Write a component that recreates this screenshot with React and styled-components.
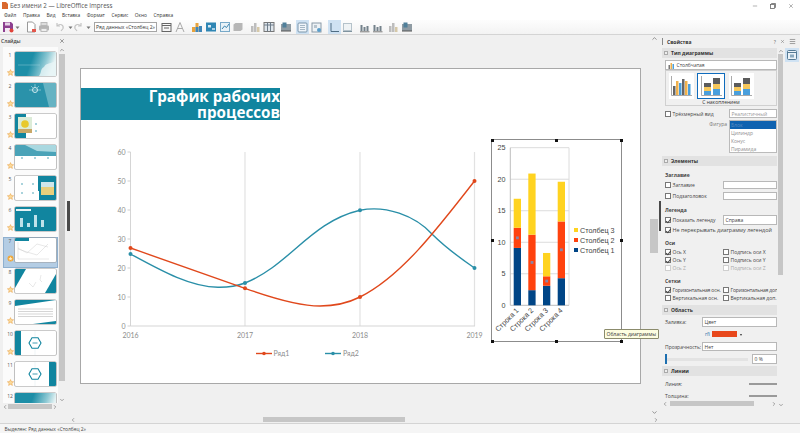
import React from "react";
import styled, { createGlobalStyle } from "styled-components";
import { ChevronUp, ChevronDown, ChevronLeft, ChevronRight, X, Minus, Menu } from "lucide-react";

const GlobalStyle = createGlobalStyle`
  html, body { margin: 0; padding: 0; background: #f0f0f0; }
  * { box-sizing: border-box; }
`;

const TEAL = "#11859f";

const Window = styled.div`
  width: 800px;
  height: 433px;
  overflow: hidden;
  display: flex;
  flex-direction: column;
  background: #f0f0f0;
  color: #333;
  font-family: "Open Sans", sans-serif;
  font-size: 5px;
`;
const TitleBar = styled.div`
  height: 10px;
  flex: none;
  display: flex;
  align-items: center;
  padding-left: 2px;
  gap: 2px;
  background: #fff;
  font-size: 6.2px;
`;
const TitleText = styled.span`
  color: #555;
`;
const WinButtons = styled.div`
  margin-left: auto;
  margin-top: 2px;
  display: flex;
  gap: 12px;
  padding-right: 6px;
  color: #666;
`;
const MenuBar = styled.div`
  height: 10px;
  flex: none;
  display: flex;
  align-items: center;
  gap: 6.6px;
  padding-left: 4px;
  background: #fff;
  font-size: 4.8px;
`;
const ToolBar = styled.div`
  height: 15px;
  flex: none;
  display: flex;
  align-items: center;
  padding-left: 1.5px;
  background: linear-gradient(#fdfdfd, #f3f3f3);
  border-bottom: 1px solid #d4d4d4;
`;
const ToolBtn = styled.div`
  width: ${(p) => p.$w || 13}px;
  height: 14px;
  flex: none;
  display: flex;
  align-items: center;
  justify-content: center;
  margin-left: ${(p) => p.$gap || 0}px;
  background: ${(p) => (p.$on ? "#cfe2f3" : "transparent")};
`;
const Combo = styled.div`
  width: 63px;
  height: 10px;
  flex: none;
  margin-left: 2.5px;
  display: flex;
  align-items: center;
  justify-content: space-between;
  padding-left: 1px;
  background: #fff;
  border: 1px solid #a5a5a5;
  white-space: nowrap;
  overflow: hidden;
`;
const Main = styled.div`
  flex: 1;
  min-height: 0;
  display: flex;
`;
const SlidesPanel = styled.div`
  width: 67px;
  flex: none;
  display: flex;
  flex-direction: column;
`;
const PanelHead = styled.div`
  height: 12px;
  flex: none;
  display: flex;
  align-items: center;
  justify-content: space-between;
  padding: 0 2px 0 1px;
  font-weight: 600;
  color: #444;
`;
const SlidesBody = styled.div`
  height: 356px;
  flex: none;
  display: flex;
  padding-left: 3px;
`;
const SlideList = styled.div`
  width: 55px;
  flex: none;
  overflow: hidden;
  padding-top: 3.7px;
  background: #fbfbfb;
`;
const SlideRow = styled.div`
  height: 31px;
  display: flex;
  padding: 1px 0 0 1px;
  background: ${(p) => (p.$on ? "#b4cde4" : "transparent")};
  box-shadow: ${(p) => (p.$on ? "inset 0 0 0 1px #8fb0cf" : "none")};
`;
const SlideNum = styled.div`
  width: 11px;
  height: 24px;
  flex: none;
  display: flex;
  flex-direction: column;
  justify-content: space-between;
  align-items: center;
  padding-left: 1px;
  color: #555;
  line-height: 6px;
  text-align: right;
`;
const ThumbFrame = styled.svg`
  width: 41px;
  height: 24px;
  flex: none;
  display: block;
  border-radius: 1px;
  box-shadow: 0 0 0 0.6px #9a9a9a;
  background: #fff;
`;
const VScroll = styled.div`
  width: ${(p) => p.$w || 8}px;
  flex: none;
  display: flex;
  flex-direction: column;
  align-items: center;
  color: #555;
`;
const VTrack = styled.div`
  flex: 1;
  width: 100%;
  padding: ${(p) => p.$top || 0}px 1px ${(p) => p.$bottom || 0}px;
`;
const VThumb = styled.div`
  width: 100%;
  height: 100%;
  background: #c6c6c6;
`;
const HScroll = styled.div`
  height: 7px;
  width: ${(p) => (p.$w ? `${p.$w}px` : "auto")};
  flex: none;
  display: flex;
  align-items: center;
  color: #555;
  padding-left: ${(p) => p.$pad || 0}px;
`;
const HTrack = styled.div`
  flex: 1;
  height: 100%;
  padding: 1px ${(p) => p.$right || 0}px 1px ${(p) => p.$left || 0}px;
`;
const HThumb = styled.div`
  width: 100%;
  height: 100%;
  background: #c6c6c6;
`;
const Splitter = styled.div`
  width: ${(p) => p.$w || 3}px;
  flex: none;
  display: flex;
  align-items: center;
  padding-bottom: 27px;
`;
const SplitGrip = styled.div`
  width: 100%;
  height: 30px;
  background: #4a4a4a;
`;
const CanvasArea = styled.div`
  flex: 1;
  min-width: 0;
  display: flex;
  flex-direction: column;
`;
const CanvasRow = styled.div`
  flex: 1;
  min-height: 0;
  display: flex;
`;
const Workspace = styled.div`
  flex: 1;
  min-width: 0;
  padding: 33px 0 0 10px;
`;
const Slide = styled.div`
  width: 561px;
  height: 316px;
  position: relative;
  background: #fff;
  border: 1px solid #a8a8a8;
`;
const SlideTitle = styled.div`
  position: absolute;
  left: 0;
  top: 18.5px;
  width: 199px;
  height: 32px;
  background: ${TEAL};
  color: #fff;
  font-weight: 700;
  font-size: 15.2px;
  line-height: 16px;
  text-align: right;
`;
const LineChart = styled.svg`
  position: absolute;
  left: 19px;
  top: 71px;
  width: 400px;
  height: 240px;
`;
const ChartFrame = styled.div`
  position: absolute;
  left: 410px;
  top: 70px;
  width: 131px;
  height: 203px;
  border: 1.2px solid #8c8c8c;
  background: #fff;
`;
const BarChart = styled.svg`
  display: block;
  width: 129px;
  height: 201px;
`;
const Handle = styled.span`
  position: absolute;
  left: ${(p) => p.$x}%;
  top: ${(p) => p.$y}%;
  width: 3px;
  height: 3px;
  margin: -1.5px 0 0 -1.5px;
  background: #111;
`;
const Tooltip = styled.div`
  position: absolute;
  left: 523px;
  top: 260px;
  padding: 0 1.5px;
  height: 10px;
  line-height: 9px;
  white-space: nowrap;
  color: #333;
  background: #fdfde0;
  border: 1px solid #8b8b6c;
  border-radius: 1px;
`;
const RightPanel = styled.div`
  width: 124px;
  flex: none;
  padding-left: 1px;
  display: flex;
  flex-direction: column;
  background: #f0f0f0;
`;
const PropsHead = styled.div`
  height: 13px;
  flex: none;
  display: flex;
  align-items: center;
  gap: 3px;
  font-weight: 700;
  color: #333;
`;
const Grip = styled.span`
  width: 1px;
  height: 7px;
  background: #888;
  margin-right: 1px;
`;
const PropsBody = styled.div`
  display: flex;
  height: 360px;
`;
const PropsContent = styled.div`
  width: 115px;
  flex: none;
  overflow: hidden;
`;
const Band = styled.div`
  height: 10px;
  margin-top: ${(p) => p.$mt || 0}px;
  display: flex;
  align-items: center;
  gap: 3px;
  padding-left: 2px;
  background: #e2e2e2;
  font-weight: 700;
  color: #333;
`;
const BandMark = styled.span`
  width: 4px;
  height: 4px;
  border: 0.6px solid #aaa;
  background: #eee;
`;
const Group = styled.div`
  padding-left: 3px;
`;
const Field = styled.div`
  height: ${(p) => p.$h || 9}px;
  margin-top: ${(p) => p.$mt || 0}px;
  margin-left: ${(p) => p.$ml || 0}px;
  flex: ${(p) => (p.$grow ? 1 : "none")};
  display: flex;
  align-items: center;
  gap: 2px;
  padding-left: 1.5px;
  background: #fff;
  border: 0.7px solid #b8b8b8;
  color: ${(p) => (p.$dim ? "#9a9a9a" : "#444")};
  white-space: nowrap;
`;
const TypeBox = styled.div`
  height: 36px;
  display: flex;
  flex-direction: column;
  align-items: center;
  border: 0.7px solid #d0d0d0;
`;
const TypeIcons = styled.div`
  align-self: flex-start;
  height: 27px;
  margin-top: 1.5px;
  padding-left: 2.5px;
  display: flex;
  gap: 3.5px;
`;
const TypeIcon = styled.div`
  width: ${(p) => (p.$on ? 28 : 25)}px;
  height: 26px;
  display: flex;
  align-items: center;
  justify-content: center;
  background: #fff;
  border: ${(p) => (p.$on ? `1.3px solid #0f6cbd` : "none")};
`;
const Row = styled.div`
  height: ${(p) => p.$h || 8}px;
  margin-top: ${(p) => p.$mt || 0}px;
  display: flex;
  align-items: center;
  white-space: nowrap;
  font-size: ${(p) => (p.$wide ? 5.4 : 5)}px;
`;
const RowCol = styled.div`
  width: ${(p) => p.$w || 58}px;
  flex: none;
  display: flex;
  align-items: center;
`;
const Heading = styled.div`
  height: 8px;
  line-height: 8px;
  margin-top: ${(p) => p.$mt || 0}px;
  font-weight: 700;
  color: #444;
`;
const Check = styled.span`
  width: 6px;
  height: 6px;
  flex: none;
  margin-right: 1.5px;
  position: relative;
  background: #fff;
  border: 0.7px solid ${(p) => (p.$off ? "#cfcfcf" : "#777")};
  &::after {
    content: "";
    display: ${(p) => (p.$on ? "block" : "none")};
    position: absolute;
    left: 1.2px;
    top: 0.2px;
    width: 2px;
    height: 3.6px;
    border: solid #444;
    border-width: 0 0.7px 0.7px 0;
    transform: rotate(40deg);
  }
`;
const Label = styled.span`
  color: ${(p) => (p.$off ? "#a8a8a8" : "#444")};
  width: ${(p) => (p.$w ? `${p.$w}px` : "auto")};
  letter-spacing: ${(p) => (p.$tight ? "-0.17px" : "normal")};
  flex: none;
`;
const ShapeRow = styled.div`
  height: 33px;
  margin-top: 2px;
  display: flex;
`;
const ShapeLabel = styled.div`
  width: 64px;
  padding: 1px 2px 0 0;
  text-align: right;
  color: #777;
`;
const ShapeList = styled.div`
  flex: 1;
  background: #fff;
  border: 0.7px solid #bbb;
`;
const ShapeItem = styled.div`
  height: 8px;
  line-height: 8px;
  padding-left: 1px;
  color: ${(p) => (p.$on ? "#5c8cc0" : "#8f8f8f")};
  background: ${(p) => (p.$on ? "#0f62b0" : "transparent")};
`;
const Swatch = styled.span`
  width: 25px;
  height: 6px;
  margin: 0 3px 0 2px;
  background: #e8481c;
`;
const ColorTag = styled.span`
  margin-left: 40px;
  color: #2a6fa8;
`;
const DropMark = styled.span`
  width: 0;
  height: 0;
  border: 1.6px solid transparent;
  border-top: 2px solid #333;
  margin-top: 2px;
`;
const SliderTrack = styled.div`
  width: 83px;
  height: 3px;
  position: relative;
  background: #e3e3e3;
`;
const SliderKnob = styled.span`
  position: absolute;
  left: 0;
  top: -3.5px;
  width: 2px;
  height: 10px;
  background: #1c6fb0;
`;
const LineSample = styled.span`
  width: 28px;
  height: 1.4px;
  margin-left: 56px;
  background: #9a9a9a;
`;
const TabsColumn = styled.div`
  width: 15px;
  flex: none;
`;
const TabHead = styled.div`
  height: 13px;
  display: flex;
  align-items: center;
  justify-content: center;
  color: #666;
`;
const Tab = styled.div`
  width: 14px;
  height: 14px;
  display: flex;
  align-items: center;
  justify-content: center;
  background: #cfe2f3;
`;
const PropsIconHead = styled.div`
  margin-left: auto;
  display: flex;
  align-items: center;
  gap: 4px;
  color: #666;
  font-weight: 400;
`;
const StatusBar = styled.div`
  height: 10px;
  flex: none;
  display: flex;
  align-items: center;
  padding-left: 4.5px;
  background: #f5f5f5;
  border-top: 1px solid #d4d4d4;
  font-size: 4.9px;
  color: #444;
`;

const toolbar = [
  { name: "save" },
  { name: "drop", w: 7, gap: -1 },
  { name: "newdoc", gap: 4 },
  { name: "print" },
  { name: "undo", gap: 3 },
  { name: "drop", w: 7 },
  { name: "redo", gap: -2 },
  { name: "drop", w: 7 },
];
const toolbar2 = [
  { name: "panel", gap: 3 },
  { name: "letter", gap: 0.5 },
  { name: "bars", gap: 4 },
  { name: "picblue", gap: 0.7 },
  { name: "grid", gap: 1.3 },
  { name: "flat" },
  { name: "palebars", gap: 4 },
  { name: "table", gap: 1 },
  { name: "tilt", gap: 4 },
  { name: "panelb", on: true, gap: 4 },
  { name: "panelc", gap: 1 },
  { name: "axis", on: true, gap: 5 },
  { name: "axisb" },
  { name: "darkbars", gap: 4 },
  { name: "darkbars" },
  { name: "palebars", gap: 2 },
  { name: "tilt", gap: 1 },
];

const ToolIcon = ({ name }) => {
  switch (name) {
    case "save":
      return (
        <svg width="12" height="12" viewBox="0 0 12 12">
          <path d="M1 1h8l2 2v8H1z" fill="#8c3f8f" />
          <rect x="3" y="1.500" width="5" height="3" fill="#e6d4e8" />
          <rect x="3" y="7" width="5" height="4" fill="#f3e8f4" />
          <circle cx="9.500" cy="9.500" r="2" fill="#e0443a" />
        </svg>
      );
    case "drop":
      return (
        <svg width="5" height="5" viewBox="0 0 5 5">
          <path d="M0.500 1.500h4L2.500 4z" fill="#777" />
        </svg>
      );
    case "newdoc":
      return (
        <svg width="12" height="12" viewBox="0 0 12 12">
          <path d="M2.500 1h5l2.500 2.500V11h-7.500z" fill="#fff" stroke="#999" />
          <path d="M7 8h4v3H7z" fill="#e2574c" />
        </svg>
      );
    case "print":
      return (
        <svg width="12" height="12" viewBox="0 0 12 12">
          <rect x="3" y="1.500" width="6" height="3" fill="#ddd" stroke="#bbb" />
          <rect x="1" y="4.500" width="10" height="5" rx="1" fill="#b5b5b5" />
          <rect x="3" y="7.500" width="6" height="3" fill="#eee" stroke="#bbb" />
        </svg>
      );
    case "undo":
      return (
        <svg width="12" height="12" viewBox="0 0 12 12" fill="none" stroke="#c4c4c4" strokeWidth="1.200">
          <path d="M3 5c3-3 7-1 6 2.500L7 10M3 2v3h3" />
        </svg>
      );
    case "redo":
      return (
        <svg width="12" height="12" viewBox="0 0 12 12" fill="none" stroke="#c4c4c4" strokeWidth="1.200">
          <path d="M9 5C6 2 2 4 3 7.500L5 10M9 2v3H6" />
        </svg>
      );
    case "panel":
      return (
        <svg width="11" height="11" viewBox="0 0 11 11" fill="none" stroke="#666">
          <rect x="1" y="1.500" width="9" height="8" />
          <path d="M1 3.500h9M3 6h5" />
        </svg>
      );
    case "letter":
      return (
        <svg width="12" height="12" viewBox="0 0 12 12" fill="none" stroke="#aaa">
          <path d="M2 11L6 1.500 10 11M3.500 7.500h5" />
        </svg>
      );
    case "bars":
      return (
        <svg width="12" height="12" viewBox="0 0 12 12">
          <rect x="1" y="6" width="3" height="5" fill="#e8a33c" />
          <rect x="4.500" y="2" width="3" height="9" fill="#e8a33c" />
          <rect x="8" y="5" width="3" height="6" fill="#3f86b8" />
          <rect x="4.500" y="6" width="3" height="5" fill="#3f86b8" />
        </svg>
      );
    case "picblue":
      return (
        <svg width="12" height="12" viewBox="0 0 12 12">
          <rect x="1" y="1.500" width="10" height="9" fill="#2f86b4" />
          <rect x="3" y="4" width="3" height="2.500" fill="#d6e8f3" />
          <path d="M7 7h3v2H7z" fill="#a9d0e6" />
        </svg>
      );
    case "grid":
      return (
        <svg width="12" height="12" viewBox="0 0 12 12">
          <rect x="1.500" y="1.500" width="9" height="9" fill="#e8f1f7" stroke="#78a9c8" />
          <path d="M3 8l2.500-3 2 1.500L10 3" stroke="#3a84ae" fill="none" />
        </svg>
      );
    case "flat":
      return (
        <svg width="12" height="12" viewBox="0 0 12 12">
          <path d="M1.500 3.500l2-1.500h7v6.500l-2 1.500h-7z" fill="#b7b7b7" />
        </svg>
      );
    case "palebars":
      return (
        <svg width="12" height="12" viewBox="0 0 12 12" fill="#bdbdbd">
          <rect x="2" y="5" width="2.500" height="6" />
          <rect x="5" y="2" width="2.500" height="9" />
          <rect x="8" y="6" width="2.500" height="5" fill="#d5c8a8" />
        </svg>
      );
    case "table":
      return (
        <svg width="12" height="12" viewBox="0 0 12 12">
          <rect x="1" y="1.500" width="10" height="9" fill="#dfe6ec" stroke="#777" />
          <path d="M4.500 1.500v9M7.500 1.500v9M1 4h10" stroke="#6e7d8a" />
        </svg>
      );
    case "tilt":
      return (
        <svg width="12" height="12" viewBox="0 0 12 12">
          <rect x="1" y="3" width="10" height="7" fill="#8f9ba3" />
          <rect x="2.500" y="1.500" width="4" height="5" fill="#4f7f9a" />
          <path d="M1 10h10" stroke="#555" />
        </svg>
      );
    case "panelb":
      return (
        <svg width="11" height="11" viewBox="0 0 11 11">
          <rect x="1" y="1" width="9" height="9" rx="1" fill="#f0f5fa" stroke="#7b96ab" />
          <path d="M3 3.500h5M3 5.500h5M3 7.500h5" stroke="#a5b7c5" />
        </svg>
      );
    case "panelc":
      return (
        <svg width="11" height="11" viewBox="0 0 11 11">
          <rect x="1" y="1" width="9" height="9" fill="#eef2f5" stroke="#8a9aa7" />
          <rect x="3" y="3" width="3" height="3" fill="#b8c4cd" />
          <circle cx="8" cy="8" r="2" fill="#5a9ec9" />
        </svg>
      );
    case "axis":
      return (
        <svg width="11" height="11" viewBox="0 0 11 11" fill="none" stroke="#4f6d84">
          <path d="M2 1v8.500h8" />
        </svg>
      );
    case "axisb":
      return (
        <svg width="11" height="11" viewBox="0 0 11 11">
          <rect x="1.500" y="1.500" width="8" height="7" fill="#eff3f5" stroke="#b5c2ca" />
          <path d="M1 9.500h9" stroke="#7f939f" />
        </svg>
      );
    case "darkbars":
      return (
        <svg width="11" height="11" viewBox="0 0 11 11" fill="#74828b">
          <rect x="1.500" y="3" width="2" height="6" />
          <rect x="4.500" y="5" width="2" height="4" />
          <rect x="7.500" y="4" width="2" height="5" />
          <path d="M1 9.800h9.500" stroke="#444" strokeWidth="0.700" />
        </svg>
      );
    default:
      return null;
  }
};

const SlideDots = ({ points }) =>
  points.map(([x, y]) => <circle key={`${x}-${y}`} cx={x} cy={y} r="0.700" fill={TEAL} />);

const Hexagon = ({ x }) => (
  <g>
    <path d="M0 0v24" transform={`translate(${x} 0)`} stroke="#d5e4e8" strokeWidth="0.400" />
    <path
      d={`M${x - 6} 12l3-5.200h6l3 5.200-3 5.200h-6z`}
      fill="#fff"
      stroke={TEAL}
      strokeWidth="1.100"
    />
    <path d={`M${x - 2.500} 12h5`} stroke={TEAL} strokeWidth="0.800" />
  </g>
);

const Thumb = ({ n }) => (
  <ThumbFrame viewBox="0 0 41 24" preserveAspectRatio="none">
    <defs>
      <linearGradient id={`t${n}`} x1="0" x2="1" y1="0" y2="0.200">
        <stop offset="0.450" stopColor="#1d8ea7" />
        <stop offset="0.800" stopColor="#8fc9d4" />
        <stop offset="1" stopColor="#e6f3f4" />
      </linearGradient>
    </defs>
    {n === 1 && (
      <>
        <rect width="41" height="24" fill={`url(#t${n})`} />
        <path d="M24 24c3-4 1-7 5-9 2-4 5-3 12-6v15z" fill="#e8f5f6" opacity="0.800" />
        <path d="M3 13h22" stroke="#a8d7df" strokeWidth="0.400" />
      </>
    )}
    {n === 2 && (
      <>
        <rect width="41" height="24" fill="#2a92aa" />
        <path d="M28 0h13v24h-7z" fill="#8fc9d4" opacity="0.600" />
        <circle cx="20" cy="7" r="2.500" fill="none" stroke="#cfe8ee" />
        <path d="M14 7h12M20 1v4M16 3l2 2M24 3l-2 2" stroke="#cfe8ee" strokeWidth="0.500" />
      </>
    )}
    {n === 3 && (
      <>
        <rect width="11" height="24" fill={TEAL} />
        <rect x="3" y="3" width="14" height="16" fill="#dcecd8" />
        <circle cx="10" cy="10" r="3.800" fill="#e8c92c" />
        <rect x="3" y="15" width="14" height="4" fill="#c8a868" />
        <SlideDots points={[[21, 10], [21, 17]]} />
      </>
    )}
    {n === 4 && (
      <>
        <rect width="41" height="11" fill="#4aa3b8" />
        <path d="M10 0h31v7L22 6z" fill="#a9d8e0" />
        <SlideDots points={[[7, 13], [20, 13], [33, 13]]} />
      </>
    )}
    {n === 5 && (
      <>
        <path d="M23 0h18v24H24v-9h-1z" fill={TEAL} />
        <rect x="26" y="6" width="13" height="13" fill="#e8cf7c" />
        <rect x="26" y="6" width="13" height="5" fill="#cfe6ea" />
        <SlideDots points={[[7, 8], [18, 8], [7, 17], [18, 17]]} />
      </>
    )}
    {n === 6 && (
      <>
        <rect width="41" height="24" fill={TEAL} />
        <rect x="1" y="2" width="15" height="2" fill="#e4f2f5" />
        <g fill="#bfe2ea">
          <rect x="5" y="11" width="3" height="9" />
          <rect x="12" y="16" width="3" height="4" />
          <rect x="19" y="8" width="3" height="12" />
          <rect x="26" y="13" width="3" height="7" />
        </g>
      </>
    )}
    {n === 7 && (
      <>
        <rect width="14" height="3" fill={TEAL} />
        <path
          d="M3 10l9 5 10-9 11 3M3 11l9 3 10 3 11-11M3 4v17h31"
          fill="none"
          stroke="#c5c5c5"
          strokeWidth="0.400"
        />
      </>
    )}
    {n === 8 && (
      <>
        <path d="M0 0h11L0 19z" fill={TEAL} />
        <path d="M41 24H30L41 5z" fill={TEAL} />
        <path d="M14 14l4 4 3-5M26 6l-1 5 2 2" stroke="#c8c8c8" strokeWidth="0.400" fill="none" />
      </>
    )}
    {n === 9 && (
      <>
        <path d="M0 0h41L0 6z" fill={TEAL} />
        <path d="M41 24H18l23-3z" fill={TEAL} />
        <path d="M3 9h35M3 11.500h35M3 14h35M3 16.500h35" stroke="#aaa" strokeWidth="0.500" />
      </>
    )}
    {n === 10 && (
      <>
        <rect width="6" height="24" fill={TEAL} />
        <Hexagon x={20} />
      </>
    )}
    {n === 11 && (
      <>
        <rect x="34" width="7" height="24" fill={TEAL} />
        <Hexagon x={20} />
      </>
    )}
    {n === 12 && <rect width="41" height="24" fill={`url(#t${n})`} />}
  </ThumbFrame>
);

const Star = ({ on }) =>
  on ? (
    <svg width="7" height="7" viewBox="0 0 7 7">
      <circle cx="3.500" cy="3.500" r="3" fill="#f0a83c" />
      <path d="M3.500 1.500l.6 1.400 1.400.1-1.100 1 .4 1.500-1.300-.8-1.300.8.4-1.500-1.100-1 1.400-.1z" fill="#fff0c8" />
    </svg>
  ) : (
    <svg width="7" height="7" viewBox="0 0 7 7">
      <path
        d="M3.500.6l.9 2 2.200.2-1.700 1.500.5 2.100-1.900-1.100-1.900 1.100.5-2.100L.4 2.800l2.200-.2z"
        fill="#fbdc9c"
        stroke="#e99a3c"
        strokeWidth="0.500"
      />
    </svg>
  );

const chartColors = ["#5b5b5b", "#f6c75a", "#4a9fdc"];

const TypeSketch = ({ kind }) => (
  <svg width="24" height="24" viewBox="0 0 24 24">
    <path d="M2.500 2v19.500H23" stroke="#aaa" fill="none" />
    {kind === 0 ? (
      <>
        <rect x="4" y="12" width="2.500" height="9" fill="#666" />
        <rect x="7" y="7" width="2.500" height="14" fill="#f0b14c" />
        <rect x="10" y="9" width="2.500" height="12" fill="#4a9fdc" />
        <rect x="13" y="5" width="2.500" height="16" fill="#666" />
        <rect x="16" y="7" width="2.500" height="14" fill="#f0b14c" />
        <rect x="19" y="10" width="2.500" height="11" fill="#4a9fdc" />
      </>
    ) : (
      [0, 1].map((i) => (
        <g key={i} transform={`translate(${5 + i * 9} 0)`}>
          <rect y={i ? 4 : 9} width="7" height={i ? 6 : 4} fill={chartColors[0]} />
          <rect y={i ? 10 : 13} width="7" height={i ? 5 : 4} fill={chartColors[1]} />
          <rect y={i ? 15 : 17} width="7" height={i ? 6 : 4} fill={chartColors[2]} />
        </g>
      ))
    )}
  </svg>
);

const yTicks = [0, 10, 20, 30, 40, 50, 60];
const yearTicks = [
  [130.5, "2016"],
  [245, "2017"],
  [360, "2018"],
  [474.5, "2019"],
];
const series1 = [[130.5, 248], [245, 288.3], [360, 297], [474.5, 181]];
const series2 = [[130.5, 254], [245, 283], [360, 210.3], [474.5, 268]];
const ORANGE_LINE = "#e0481c";
const TEAL_LINE = "#2a8fa8";

const stacks = [
  [513.7, 9.1, 12.3, 16.9],
  [528.3, 2.4, 11.2, 20.9],
  [543, 3.1, 4.6, 8.3],
  [557.7, 4.3, 13.3, 19.6],
];
const barY = (v) => 305.3 - v * 6.304;
const legend = [
  [230, "#ffd320", "Столбец 3"],
  [240, "#ff420e", "Столбец 2"],
  [250, "#004586", "Столбец 1"],
];
const handles = [
  [0, 0], [50, 0], [100, 0],
  [0, 50], [100, 50],
  [0, 100], [50, 100], [100, 100],
];

const LineChartView = () => (
  <LineChart viewBox="100 140 400 240" fontFamily="Lato, sans-serif" fontSize="7" fill="#8c8c8c">
    {yearTicks.slice(1).map(([x]) => (
      <path key={x} d={`M${x} 152v174`} stroke="#e2e2e2" strokeWidth="1.200" />
    ))}
    <path d="M130.500 152v174H475" stroke="#d5d5d5" fill="none" />
    {yTicks.map((t) => {
      const y = 326 - t * 2.9;
      return (
        <g key={t}>
          <path d={`M127.500 ${y}h3`} stroke="#cfcfcf" />
          <text x="125.500" y={y + 2.700} textAnchor="end">{t}</text>
        </g>
      );
    })}
    {yearTicks.map(([x, label]) => (
      <text key={label} x={x} y="337.500" textAnchor="middle">{label}</text>
    ))}
    <path
      d="M130.500 254C160 270 190 287 218 287.300C228 287.500 237 286 245 283C290 265 310 222 360 210.300C385 205 415 215 433 235C445 247 460 258 474.500 268"
      fill="none"
      stroke={TEAL_LINE}
      strokeWidth="1.400"
    />
    <path
      d="M130.500 248C170 262 210 276 245 288.300C275 299 300 306 320 306C335 306 348 303 360 297C400 277 435 232 474.500 181"
      fill="none"
      stroke={ORANGE_LINE}
      strokeWidth="1.400"
    />
    {series2.map(([x, y]) => (
      <circle key={x} cx={x} cy={y} r="2" fill={TEAL_LINE} />
    ))}
    {series1.map(([x, y]) => (
      <circle key={x} cx={x} cy={y} r="2" fill={ORANGE_LINE} />
    ))}
    <path d="M256 353.500h16" stroke={ORANGE_LINE} strokeWidth="1.400" />
    <circle cx="264" cy="353.500" r="1.800" fill={ORANGE_LINE} />
    <text x="273.500" y="356">Ряд1</text>
    <path d="M325 353.500h16" stroke={TEAL_LINE} strokeWidth="1.400" />
    <circle cx="333" cy="353.500" r="1.800" fill={TEAL_LINE} />
    <text x="343" y="356">Ряд2</text>
  </LineChart>
);

const BarChartView = () => (
  <BarChart viewBox="492 140 129 201" fontFamily="'Liberation Sans', sans-serif" fontSize="7.200" fill="#444">
    {[5, 10, 15, 20, 25].map((t) => (
      <path key={t} d={`M510.300 ${barY(t)}H569`} stroke="#dcdcdc" />
    ))}
    <path d="M569 147.700V305.300" stroke="#dcdcdc" />
    <path d="M510.300 147.700V305.300H569" stroke="#bdbdbd" fill="none" />
    {[0, 5, 10, 15, 20, 25].map((t) => (
      <text key={t} x="505.500" y={barY(t) + 2.700} textAnchor="end">{t}</text>
    ))}
    {stacks.map(([x, a, b, c], i) => (
      <g key={x}>
        <rect x={x} y={barY(a)} width="7.300" height={a * 6.304} fill="#004586" />
        <rect x={x} y={barY(b)} width="7.300" height={(b - a) * 6.304} fill="#ff420e" />
        <rect x={x} y={barY(c)} width="7.300" height={(c - b) * 6.304} fill="#ffd320" />
        <rect x={x + 2.300} y={barY((a + b) / 2) - 1.400} width="2.800" height="2.800" fill="#8c84a4" />
        <text
          transform={`translate(${x + 5.500} 311) rotate(-45)`}
          textAnchor="end"
        >
          {`Строка ${i + 1}`}
        </text>
      </g>
    ))}
    {legend.map(([y, color, label]) => (
      <g key={label}>
        <rect x="574" y={y - 2} width="4" height="4" fill={color} />
        <text x="580" y={y + 2.700}>{label}</text>
      </g>
    ))}
  </BarChart>
);

const CheckRow = ({ on, off, tight, children }) => (
  <>
    <Check $on={on} $off={off} />
    <Label $off={off} $tight={tight}>{children}</Label>
  </>
);

const PropsPane = () => (
  <PropsContent>
    <Band>
      <BandMark />
      Тип диаграммы
    </Band>
    <Group>
      <Field $h={10} $mt={2}>
        <svg width="7" height="7" viewBox="0 0 7 7">
          <rect x="0.500" y="3" width="1.500" height="4" fill="#777" />
          <rect x="2.500" y="1" width="1.500" height="6" fill="#f0b14c" />
          <rect x="4.500" y="2" width="1.500" height="5" fill="#4a9fdc" />
        </svg>
        Столбчатая
      </Field>
      <TypeBox>
        <TypeIcons>
          <TypeIcon><TypeSketch kind={0} /></TypeIcon>
          <TypeIcon $on><TypeSketch kind={1} /></TypeIcon>
          <TypeIcon><TypeSketch kind={2} /></TypeIcon>
        </TypeIcons>
        С накоплением
      </TypeBox>
      <Row $h={9} $mt={3}>
        <RowCol $w={64}>
          <CheckRow>Трёхмерный вид</CheckRow>
        </RowCol>
        <Field $grow $dim>Реалистичный</Field>
      </Row>
      <ShapeRow>
        <ShapeLabel>Фигура</ShapeLabel>
        <ShapeList>
          <ShapeItem $on>Блок</ShapeItem>
          <ShapeItem>Цилиндр</ShapeItem>
          <ShapeItem>Конус</ShapeItem>
          <ShapeItem>Пирамида</ShapeItem>
        </ShapeList>
      </ShapeRow>
    </Group>
    <Band $mt={3}>
      <BandMark />
      Элементы
    </Band>
    <Group>
      <Heading $mt={5}>Заглавие</Heading>
      <Row $mt={2}>
        <RowCol><CheckRow>Заглавие</CheckRow></RowCol>
        <Field $grow $h={8} />
      </Row>
      <Row $mt={3}>
        <RowCol><CheckRow>Подзаголовок</CheckRow></RowCol>
        <Field $grow $h={8} />
      </Row>
      <Heading $mt={6}>Легенда</Heading>
      <Row $h={10} $mt={1}>
        <RowCol><CheckRow on>Показать легенду</CheckRow></RowCol>
        <Field $grow $h={10}>Справа</Field>
      </Row>
      <Row $mt={1} $wide>
        <CheckRow on>Не перекрывать диаграмму легендой</CheckRow>
      </Row>
      <Heading $mt={5}>Оси</Heading>
      <Row $mt={1}>
        <RowCol><CheckRow on>Ось X</CheckRow></RowCol>
        <CheckRow>Подпись оси X</CheckRow>
      </Row>
      <Row>
        <RowCol><CheckRow on>Ось Y</CheckRow></RowCol>
        <CheckRow>Подпись оси Y</CheckRow>
      </Row>
      <Row>
        <RowCol><CheckRow off>Ось Z</CheckRow></RowCol>
        <CheckRow off>Подпись оси Z</CheckRow>
      </Row>
      <Heading $mt={5}>Сетки</Heading>
      <Row $mt={1}>
        <RowCol><CheckRow on tight>Горизонтальная осн.</CheckRow></RowCol>
        <CheckRow tight>Горизонтальная доп</CheckRow>
      </Row>
      <Row>
        <RowCol><CheckRow>Вертикальная осн.</CheckRow></RowCol>
        <CheckRow>Вертикальная доп.</CheckRow>
      </Row>
    </Group>
    <Band $mt={3}>
      <BandMark />
      Область
    </Band>
    <Group>
      <Row $h={10} $mt={2}>
        <Label $w={37}>Заливка:</Label>
        <Field $grow $h={10}>Цвет</Field>
      </Row>
      <Row $mt={3}>
        <ColorTag>rfi</ColorTag>
        <Swatch />
        <DropMark />
      </Row>
      <Row $h={9} $mt={4}>
        <Label $w={37}>Прозрачность:</Label>
        <Field $grow>Нет</Field>
      </Row>
      <Row $h={10} $mt={3}>
        <SliderTrack><SliderKnob /></SliderTrack>
        <Field $grow $h={10} $ml={4}>0 %</Field>
      </Row>
    </Group>
    <Band $mt={2}>
      <BandMark />
      Линии
    </Band>
    <Group>
      <Row $mt={4}>
        <Label $w={28}>Линия:</Label>
        <LineSample />
      </Row>
      <Row $mt={4}>
        <Label $w={28}>Толщина:</Label>
        <LineSample />
      </Row>
    </Group>
    <HScroll>
      <ChevronLeft size={6} />
      <HTrack $right={17} $left={2}><HThumb /></HTrack>
      <ChevronRight size={6} />
    </HScroll>
  </PropsContent>
);

const App = () => (
  <Window>
    <GlobalStyle />
    <TitleBar>
      <svg width="6" height="7" viewBox="0 0 6 7">
        <path d="M0 0h4l2 2v5H0z" fill="#d9682e" />
      </svg>
      <TitleText>Без имени 2 — LibreOffice Impress</TitleText>
      <WinButtons>
        <Minus size={6} />
        <svg width="6" height="6" viewBox="0 0 6 6" fill="none" stroke="#666" strokeWidth="0.800">
          <rect x="0.500" y="1.500" width="4" height="4" />
          <path d="M1.500 1V.5h4v4H5" />
        </svg>
        <X size={6} />
      </WinButtons>
    </TitleBar>
    <MenuBar>
      {["Файл", "Правка", "Вид", "Вставка", "Формат", "Сервис", "Окно", "Справка"].map((m) => (
        <span key={m}>{m}</span>
      ))}
    </MenuBar>
    <ToolBar>
      {toolbar.map((t, i) => (
        <ToolBtn key={i} $gap={t.gap} $w={t.w}><ToolIcon name={t.name} /></ToolBtn>
      ))}
      <Combo>
        Ряд данных «Столбец 2»
        <ChevronDown size={6} />
      </Combo>
      {toolbar2.map((t, i) => (
        <ToolBtn key={i} $gap={t.gap} $on={t.on}><ToolIcon name={t.name} /></ToolBtn>
      ))}
    </ToolBar>
    <Main>
      <SlidesPanel>
        <PanelHead>
          Слайды
          <X size={6} />
        </PanelHead>
        <SlidesBody>
          <SlideList>
            {Array.from({ length: 12 }, (_, i) => i + 1).map((n) => (
              <SlideRow key={n} $on={n === 7}>
                <SlideNum>
                  <span>{n}</span>
                  <Star on={n === 7} />
                </SlideNum>
                <Thumb n={n} />
              </SlideRow>
            ))}
          </SlideList>
          <VScroll>
            <ChevronUp size={6} />
            <VTrack $top={1} $bottom={16}><VThumb /></VTrack>
            <ChevronDown size={6} />
          </VScroll>
        </SlidesBody>
        <HScroll $w={58} $pad={2}>
          <ChevronLeft size={6} />
          <HTrack><HThumb /></HTrack>
          <ChevronRight size={6} />
        </HScroll>
      </SlidesPanel>
      <Splitter><SplitGrip /></Splitter>
      <CanvasArea>
        <CanvasRow>
          <Workspace>
            <Slide>
              <SlideTitle>График рабочих<br />процессов</SlideTitle>
              <LineChartView />
              <ChartFrame>
                <BarChartView />
                {handles.map(([x, y]) => (
                  <Handle key={`${x}-${y}`} $x={x} $y={y} />
                ))}
              </ChartFrame>
              <Tooltip>Область диаграммы</Tooltip>
            </Slide>
          </Workspace>
          <VScroll $w={10}>
            <ChevronUp size={7} />
            <VTrack $top={177} $bottom={156}><VThumb /></VTrack>
            <ChevronDown size={7} />
          </VScroll>
        </CanvasRow>
        <HScroll>
          <ChevronLeft size={6} />
          <HTrack $left={187} $right={248}><HThumb /></HTrack>
          <ChevronRight size={6} />
        </HScroll>
      </CanvasArea>
      <Splitter $w={2}><SplitGrip /></Splitter>
      <RightPanel>
        <PropsHead>
          <Grip />
          Свойства
          <PropsIconHead>
            ?
            <X size={5} />
          </PropsIconHead>
        </PropsHead>
        <PropsBody>
          <PropsPane />
          <VScroll $w={7}>
            <ChevronUp size={6} />
            <VTrack $bottom={127}><VThumb /></VTrack>
            <ChevronDown size={6} />
          </VScroll>
        </PropsBody>
      </RightPanel>
      <TabsColumn>
        <TabHead><Menu size={7} /></TabHead>
        <Tab>
          <svg width="10" height="10" viewBox="0 0 10 10">
            <rect x="0.500" y="0.500" width="9" height="9" rx="1" fill="#eaf2f8" stroke="#557a95" />
            <path d="M0.500 2.500h9" stroke="#557a95" />
            <rect x="3" y="4.500" width="4" height="3" fill="#8aa9bf" />
          </svg>
        </Tab>
      </TabsColumn>
    </Main>
    <StatusBar>Выделен: Ряд данных «Столбец 2»</StatusBar>
  </Window>
);

export default App;
